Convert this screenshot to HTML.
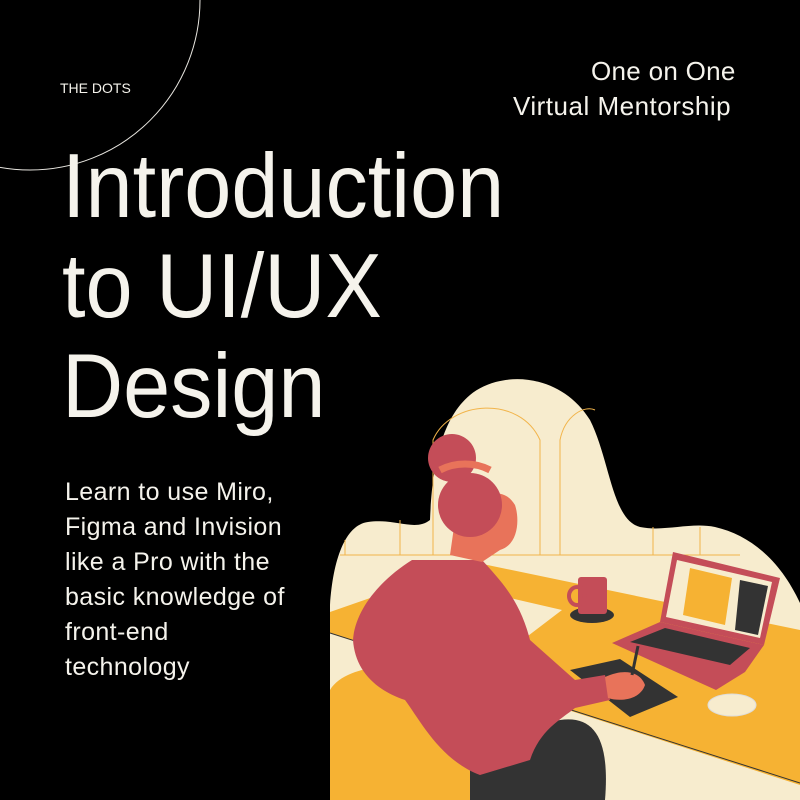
<!DOCTYPE html>
<html><head><meta charset="utf-8"><style>
html,body{margin:0;padding:0;background:#000;}
#c{position:relative;width:800px;height:800px;overflow:hidden;background:#000;font-family:"Liberation Sans",sans-serif;color:#f5f3ec;}
.t{position:absolute;white-space:nowrap;}
.title{left:62px;font-size:91px;line-height:1;transform:scaleX(0.93);transform-origin:left top;}
.body{left:65px;font-size:25px;line-height:35px;letter-spacing:0.4px;}
</style></head><body><div id="c">
<svg width="800" height="800" style="position:absolute;left:0;top:0">
<circle cx="30" cy="0" r="170" fill="none" stroke="#e8e6e0" stroke-width="1"/>
<path d="M330 800 L330 605 C333 560 345 525 368 522 C395 518 415 532 430 520 C432 470 440 420 470 395 C500 370 560 372 590 420 C610 460 612 520 640 527 C665 532 690 522 715 527 C750 535 780 560 800 603 L800 800 Z" fill="#f7ecce"/>
<g fill="none" stroke="#f2b44a" stroke-width="1">
<path d="M433 555 L433 440 C450 400 520 395 540 440 L540 555"/>
<path d="M560 555 L560 440 C565 415 585 405 595 410"/>
<path d="M345 555 L345 540 M400 555 L400 520 M653 555 L653 527 M700 555 L700 527"/>
<path d="M340 555 L740 555"/>
</g>
<path d="M330 612 L473 562 L800 630 L800 785 L330 633 Z" fill="#f6b233"/>
<path d="M330 633 L800 783" stroke="#333" stroke-width="1"/>
<path d="M510 598 L562 610 L520 642 L496 633 Z" fill="#f7ecce"/>
<ellipse cx="592" cy="615" rx="22" ry="8" fill="#333"/>
<rect x="578" y="577" width="29" height="37" rx="3" fill="#c44d58"/>
<ellipse cx="577" cy="596" rx="8" ry="9" fill="none" stroke="#c44d58" stroke-width="4"/>
<path d="M673 552 L780 578 L764 645 L660 622 Z" fill="#c44d58"/>
<path d="M677 560 L772 582 L760 638 L666 617 Z" fill="#f7ecce"/>
<path d="M690 568 L732 578 L725 625 L683 615 Z" fill="#f6b233"/>
<path d="M740 580 L768 586 L758 635 L735 630 Z" fill="#333"/>
<path d="M612 643 L660 622 L764 645 L745 672 L716 690 Z" fill="#c44d58"/>
<path d="M630 642 L665 628 L750 648 L730 665 Z" fill="#333"/>
<ellipse cx="732" cy="705" rx="24" ry="11" fill="#f7ecce" stroke="#ddd"/>
<path d="M570 670 L620 659 L678 697 L630 717 Z" fill="#333"/>
<path d="M330 690 C345 665 400 662 420 672 C450 690 470 740 520 760 C560 775 580 790 585 800 L330 800 Z" fill="#f6b233"/>
<path d="M470 740 L560 720 C595 715 610 740 605 800 L470 800 Z" fill="#333"/>
<path d="M412 560 L482 560 C500 580 520 600 530 640 L575 680 L605 675 L610 700 L575 708 C560 720 540 730 530 760 L480 775 C440 760 420 720 405 700 C375 690 355 670 353 640 C355 610 380 580 412 560 Z" fill="#c44d58"/>
<path d="M605 677 C625 668 640 672 645 685 C640 700 620 702 608 698 Z" fill="#e8735a"/>
<path d="M638 646 L632 675" stroke="#333" stroke-width="3"/>
<path d="M455 520 C470 500 500 480 515 505 C520 520 518 545 500 550 L482 562 L450 555 Z" fill="#e8735a"/>
<circle cx="470" cy="505" r="32" fill="#c44d58"/>
<circle cx="452" cy="458" r="24" fill="#c44d58"/>
<path d="M440 470 C455 462 475 462 490 470" stroke="#e8735a" stroke-width="7" fill="none"/>
</svg>
<div class="t" style="left:60px;top:80px;font-size:14px;">THE DOTS</div>
<div class="t" style="left:591px;top:56px;font-size:26px;letter-spacing:0.3px;">One on One</div>
<div class="t" style="left:513px;top:91px;font-size:26px;letter-spacing:0.5px;">Virtual Mentorship</div>
<div class="t title" style="top:141px;">Introduction</div>
<div class="t title" style="top:241px;">to UI/UX</div>
<div class="t title" style="top:341px;">Design</div>
<div class="t body" style="top:475px;">Learn to use Miro,<br>Figma and Invision<br>like a Pro with the<br>basic knowledge of<br>front-end<br>technology</div>
</div></body></html>
